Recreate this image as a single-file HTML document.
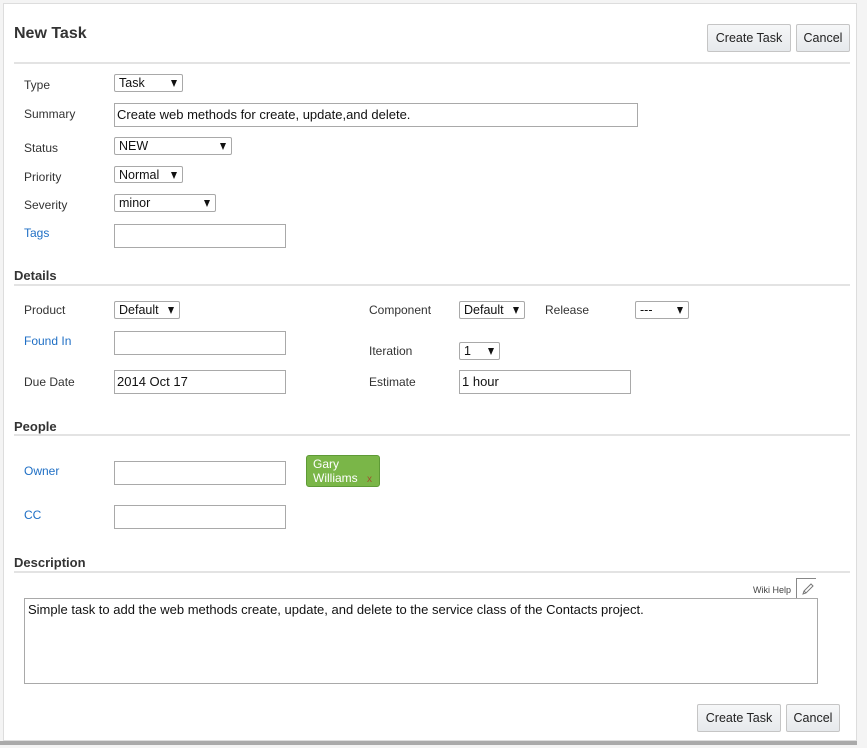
<!DOCTYPE html>
<html><head><style>
body{margin:0;width:867px;height:748px;background:#f4f4f4;font-family:"Liberation Sans",sans-serif;font-size:12px;color:#333;position:relative;overflow:hidden}
.panel{position:absolute;left:3px;top:3px;width:854px;height:738px;background:#fff;border:1px solid #ddd;box-sizing:border-box}
.a{position:absolute}
.lbl{position:absolute;left:24px;line-height:14px}
.blue{color:#1f6fc5}
.in{position:absolute;border:1px solid #a9a9a9;background:#fff;box-sizing:border-box;padding-left:2px;font-size:13px;color:#111;line-height:22px}
.sel{position:absolute;border:1px solid #a9a9a9;border-radius:2px;background:#fff;box-sizing:border-box;padding-left:4px;font-size:12.5px;color:#111;line-height:16px}
.sel:after{content:"";position:absolute;right:5px;top:5px;border-left:3.5px solid transparent;border-right:3.5px solid transparent;border-top:7px solid #111}
.btn{position:absolute;border:1px solid #c5c5c5;border-radius:2px;background:linear-gradient(#f6f7f8,#e6e9ec);box-sizing:border-box;text-align:center;font-size:12.5px;color:#222;line-height:26px}
.h{position:absolute;left:14px;font-weight:bold;font-size:13px;color:#333}
.hr{position:absolute;left:14px;width:836px;height:2px;background:#e3e3e3}
</style></head><body>
<div class="panel"></div>
<div class="a" style="left:14px;top:25px;font-size:16px;font-weight:bold">New Task</div>
<div class="btn" style="left:707px;top:24px;width:84px;height:28px">Create Task</div>
<div class="btn" style="left:796px;top:24px;width:54px;height:28px">Cancel</div>
<div class="hr" style="top:62px"></div>

<div class="lbl" style="top:78px">Type</div>
<div class="sel" style="left:114px;top:74px;width:69px;height:18px">Task</div>
<div class="lbl" style="top:107px">Summary</div>
<div class="in" style="left:114px;top:103px;width:524px;height:24px">Create web methods for create, update,and delete.</div>
<div class="lbl" style="top:141px">Status</div>
<div class="sel" style="left:114px;top:137px;width:118px;height:18px">NEW</div>
<div class="lbl" style="top:170px">Priority</div>
<div class="sel" style="left:114px;top:166px;width:69px;height:17px">Normal</div>
<div class="lbl" style="top:198px">Severity</div>
<div class="sel" style="left:114px;top:194px;width:102px;height:18px">minor</div>
<div class="lbl blue" style="top:226px">Tags</div>
<div class="in" style="left:114px;top:224px;width:172px;height:24px"></div>

<div class="h" style="top:268px">Details</div>
<div class="hr" style="top:284px"></div>
<div class="lbl" style="top:303px">Product</div>
<div class="sel" style="left:114px;top:301px;width:66px;height:18px">Default</div>
<div class="a" style="left:369px;top:303px">Component</div>
<div class="sel" style="left:459px;top:301px;width:66px;height:18px">Default</div>
<div class="a" style="left:545px;top:303px">Release</div>
<div class="sel" style="left:635px;top:301px;width:54px;height:18px">---</div>
<div class="lbl blue" style="top:334px">Found In</div>
<div class="in" style="left:114px;top:331px;width:172px;height:24px"></div>
<div class="a" style="left:369px;top:344px">Iteration</div>
<div class="sel" style="left:459px;top:342px;width:41px;height:18px">1</div>
<div class="lbl" style="top:375px">Due Date</div>
<div class="in" style="left:114px;top:370px;width:172px;height:24px">2014 Oct 17</div>
<div class="a" style="left:369px;top:375px">Estimate</div>
<div class="in" style="left:459px;top:370px;width:172px;height:24px">1 hour</div>

<div class="h" style="top:419px">People</div>
<div class="hr" style="top:434px"></div>
<div class="lbl blue" style="top:464px">Owner</div>
<div class="in" style="left:114px;top:461px;width:172px;height:24px"></div>
<div class="a" style="left:306px;top:455px;width:74px;height:32px;background:#7ab648;border:1px solid #5e9a36;border-radius:3px;box-sizing:border-box;color:#fff;font-size:12px;line-height:14px;padding:1px 0 0 6px">Gary<br>Williams <span style="color:#a0522d;font-size:10px;margin-left:6px">x</span></div>
<div class="lbl blue" style="top:508px">CC</div>
<div class="in" style="left:114px;top:505px;width:172px;height:24px"></div>

<div class="h" style="top:555px">Description</div>
<div class="hr" style="top:571px"></div>
<div class="a" style="left:753px;top:585px;font-size:9px;color:#444">Wiki Help</div>
<div class="a" style="left:796px;top:578px;width:20px;height:21px;border-left:1px solid #888;border-top:1px solid #888;box-sizing:border-box">
<svg width="18" height="18" viewBox="0 0 18 18" style="position:absolute;left:1px;top:1px"><path d="M5 14 L6 11 L13 4 L15 6 L8 13 Z M6 11 L8 13" fill="none" stroke="#777" stroke-width="1"/></svg></div>
<div class="in" style="left:24px;top:598px;width:794px;height:86px;line-height:16px;padding:3px 3px;font-size:13px">Simple task to add the web methods create, update, and delete to the service class of the Contacts project.</div>

<div class="btn" style="left:697px;top:704px;width:84px;height:28px">Create Task</div>
<div class="btn" style="left:786px;top:704px;width:54px;height:28px">Cancel</div>
<div class="a" style="left:0;top:741px;width:857px;height:4px;background:#aaa"></div>
</body></html>
